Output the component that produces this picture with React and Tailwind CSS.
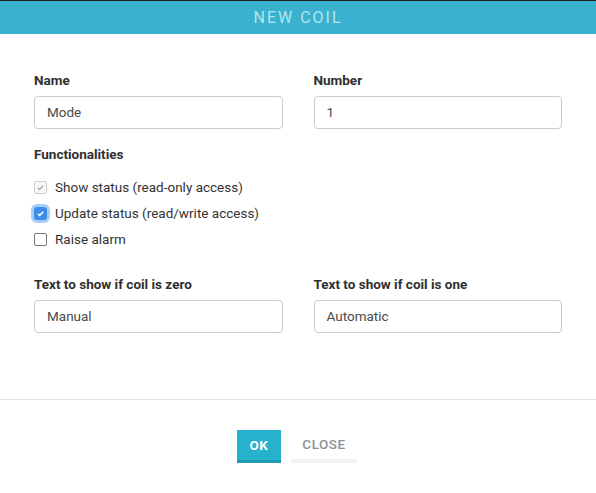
import { useState } from "react";

function Check({ state }) {
  if (state === "disabled") {
    return (
      <span className="w-[13px] h-[13px] rounded-[2px] border border-[#cfcfcf] bg-[#f8f8f8] flex items-center justify-center">
        <svg width="9" height="9" viewBox="0 0 10 10"><path d="M2 5.2l2 2L8 3" fill="none" stroke="#a8a8a8" strokeWidth="1.5" /></svg>
      </span>
    );
  }
  if (state === "checked") {
    return (
      <span className="w-[13px] h-[13px] rounded-[3px] bg-[#3b8ee8] ring-[3px] ring-[#a9cdf6] flex items-center justify-center">
        <svg width="9" height="9" viewBox="0 0 10 10"><path d="M2 5.2l2 2L8 3" fill="none" stroke="#fff" strokeWidth="1.6" /></svg>
      </span>
    );
  }
  return <span className="w-[13px] h-[13px] rounded-[2px] border border-[#777] bg-white" />;
}

function Field({ label, value }) {
  return (
    <div className="flex flex-col">
      <label className="text-[13.5px] leading-4 font-bold text-[#2f2f2f] mb-2">{label}</label>
      <div className="h-[33px] border border-[#cacaca] rounded-[4px] px-[12px] flex items-center text-[13.5px] text-[#4a4a4a]">
        {value}
      </div>
    </div>
  );
}

export default function App() {
  const [items] = useState([
    { label: "Show status (read-only access)", state: "disabled" },
    { label: "Update status (read/write access)", state: "checked" },
    { label: "Raise alarm", state: "off" },
  ]);

  return (
    <div className="w-[596px] h-[493px] bg-white flex flex-col" style={{ fontFamily: "Roboto, 'Noto Sans', sans-serif" }}>
      <div className="h-px bg-[#222]" />
      <div className="h-[33px] bg-[#3ab2cf] flex items-center justify-center">
        <span className="text-[16px] tracking-[2px] text-[#b3e5ef]">NEW COIL</span>
      </div>

      <div className="pl-[34px] pr-[34px] pt-[38px] flex flex-col">
        <div className="grid grid-cols-2 gap-x-[31px]">
          <Field label="Name" value="Mode" />
          <Field label="Number" value="1" />
        </div>

        <div className="mt-[17px] text-[13.5px] leading-4 font-bold text-[#2f2f2f]">Functionalities</div>
        <div className="mt-3 flex flex-col">
          {items.map((it) => (
            <div key={it.label} className="h-[26px] flex items-center gap-[8px] text-[13.5px] text-[#333]">
              <Check state={it.state} />
              <span>{it.label}</span>
            </div>
          ))}
        </div>

        <div className="mt-[24px] grid grid-cols-2 gap-x-[31px]">
          <Field label="Text to show if coil is zero" value="Manual" />
          <Field label="Text to show if coil is one" value="Automatic" />
        </div>
      </div>

      <div className="mt-[66px] h-px bg-[#e3e3e3]" />

      <div className="pt-[30px] flex justify-center gap-[10px] pr-[2px]">
        <button className="w-[44px] h-[33px] bg-[#26b1cc] border-b-[3px] border-[#1f9bb4] text-white text-[13.5px] font-bold tracking-[0.5px]">
          OK
        </button>
        <button className="w-[66px] h-[33px] border-b-[4px] border-[#f1f1f1] text-[#8c9195] text-[13.5px] font-medium tracking-[0.5px]">
          CLOSE
        </button>
      </div>
    </div>
  );
}
